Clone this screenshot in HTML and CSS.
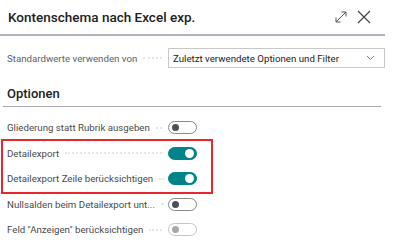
FILE: index.html
```html
<!DOCTYPE html>
<html lang="de">
<head>
  <meta charset="UTF-8">
  <title>Kontenschema nach Excel exp.</title>
  <link rel="stylesheet" href="styles.css">
</head>
<body>
  <div class="dialog">
    <div class="header">
      <h1>Kontenschema nach Excel exp.</h1>
      <div class="header-icons">
        <svg width="12" height="12" viewBox="0 0 12 12"><path d="M1 11L11 1M6.5 1H11V5.5M1 6.5V11H5.5" fill="none" stroke="#555" stroke-width="1"/></svg>
        <svg width="14" height="14" viewBox="0 0 14 14"><path d="M1 1L13 13M13 1L1 13" fill="none" stroke="#444" stroke-width="1.2"/></svg>
      </div>
    </div>

    <div class="field">
      <div class="caption">
        <span class="label">Standardwerte verwenden von</span>
        <span class="leader"></span>
      </div>
      <div class="select">
        <span>Zuletzt verwendete Optionen und Filter</span>
        <svg width="9" height="6" viewBox="0 0 9 6"><path d="M1 1L4.5 4.5L8 1" fill="none" stroke="#888" stroke-width="1"/></svg>
      </div>
    </div>

    <h2>Optionen</h2>

    <div class="options">
      <div class="row">
        <div class="caption">
          <span class="label">Gliederung statt Rubrik ausgeben</span>
          <span class="leader"></span>
        </div>
        <span class="toggle"></span>
      </div>
      <div class="highlight">
        <div class="row">
          <div class="caption">
            <span class="label">Detailexport</span>
            <span class="leader"></span>
          </div>
          <span class="toggle on"></span>
        </div>
        <div class="row">
          <div class="caption">
            <span class="label">Detailexport Zeile berücksichtigen</span>
            <span class="leader"></span>
          </div>
          <span class="toggle on"></span>
        </div>
      </div>
      <div class="row">
        <div class="caption">
          <span class="label">Nullsalden beim Detailexport unt...</span>
          <span class="leader"></span>
        </div>
        <span class="toggle"></span>
      </div>
      <div class="row">
        <div class="caption">
          <span class="label">Feld "Anzeigen" berücksichtigen</span>
          <span class="leader"></span>
        </div>
        <span class="toggle disabled"></span>
      </div>
    </div>
  </div>
</body>
</html>
```

FILE: styles.css
```css
body {
  margin: 0;
  background: #fff;
  font-family: Roboto, "Noto Sans", sans-serif;
  color: #212121;
}
.dialog {
  width: 385px;
}
.header {
  display: flex;
  align-items: center;
  justify-content: space-between;
  height: 34px;
  padding: 0 14px 0 8px;
  border-bottom: 2px solid #b1b1b9;
}
.header h1 {
  margin: 0;
  font-size: 13.5px;
  font-weight: 500;
}
.header-icons {
  display: flex;
  align-items: center;
  gap: 10px;
}
.field {
  display: flex;
  align-items: center;
  margin: 12px 0 0 7px;
  height: 20px;
}
.caption {
  display: flex;
  align-items: center;
  width: 161px;
  flex: none;
}
.label {
  font-size: 9.7px;
  color: #4a4a4a;
  white-space: nowrap;
}
.leader {
  flex: 1;
  margin: 0 6px;
  border-bottom: 2px dotted #e6e6e6;
  height: 0;
}
.field .label {
  color: #616161;
}
.select {
  display: flex;
  align-items: center;
  justify-content: space-between;
  width: 202px;
  height: 18px;
  padding: 0 9px 0 4px;
  border: 1px solid #c8c8c8;
  font-size: 9.7px;
  color: #212121;
}
h2 {
  margin: 18px 0 0 3px;
  padding: 0 0 5px 4px;
  font-size: 13px;
  font-weight: 500;
  border-bottom: 1px solid #a9a9b1;
  width: 374px;
}
.options {
  margin-top: 8px;
  width: 208px;
  padding-left: 3px;
}
.row {
  display: flex;
  align-items: center;
  height: 25.5px;
  padding-left: 4px;
}
.highlight {
  outline: 2px solid #e8262d;
}
.toggle {
  position: relative;
  width: 27px;
  height: 11px;
  border: 1px solid #8a8886;
  border-radius: 7px;
  flex: none;
}
.toggle::after {
  content: "";
  position: absolute;
  left: 3px;
  top: 2px;
  width: 7px;
  height: 7px;
  border-radius: 50%;
  background: #4a4f5c;
}
.toggle.on {
  background: #00848a;
  border-color: #00848a;
}
.toggle.on::after {
  left: auto;
  right: 2px;
  top: 1px;
  width: 9px;
  height: 9px;
  background: #fff;
}
.toggle.disabled {
  border-color: #c6c6c6;
}
.toggle.disabled::after {
  background: #a6a9b0;
}
```
